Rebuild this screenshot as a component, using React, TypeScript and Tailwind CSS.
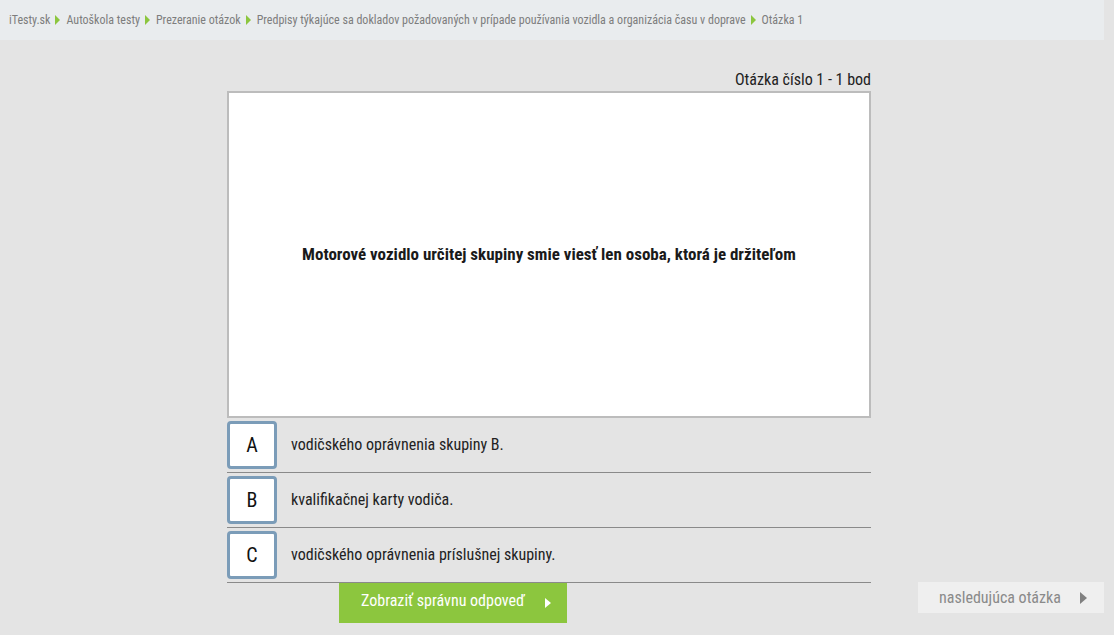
import React from "react";

const crumbs = [
  "iTesty.sk",
  "Autoškola testy",
  "Prezeranie otázok",
  "Predpisy týkajúce sa dokladov požadovaných v prípade používania vozidla a organizácia času v doprave",
  "Otázka 1",
];

const answers = [
  { key: "A", text: "vodičského oprávnenia skupiny B." },
  { key: "B", text: "kvalifikačnej karty vodiča." },
  { key: "C", text: "vodičského oprávnenia príslušnej skupiny." },
];

function Tri({ className }: { className: string }) {
  return (
    <svg viewBox="0 0 6 10" preserveAspectRatio="none" className={className} aria-hidden>
      <path d="M0 0 L6 5 L0 10 Z" fill="currentColor" />
    </svg>
  );
}

export default function App() {
  return (
    <div className="min-h-[635px] w-[1114px] bg-[#e4e4e4] font-['Roboto_Condensed','Liberation_Sans_Narrow','DejaVu_Sans_Condensed',Roboto,sans-serif] font-stretch-condensed">
      <div className="w-[1104px]">
        <nav className="flex h-[40px] items-center bg-[#e9ecee] pl-[9px] text-[12px] text-[#7d7d7d]">
          {crumbs.map((c, i) => (
            <React.Fragment key={c}>
              {i > 0 && <Tri className="ml-[5px] mr-[6px] h-[10px] w-[5px] text-[#8cc63e]" />}
              <span className="whitespace-nowrap">{c}</span>
            </React.Fragment>
          ))}
        </nav>

        <main className="ml-[227px] w-[644px] pt-[30px]">
          <div className="text-right text-[16px] leading-[20px] text-[#222]">Otázka číslo 1 - 1 bod</div>
          <div className="mt-[1px] flex h-[327px] items-center justify-center border-2 border-[#bcbcbc] bg-white">
            <p className="text-[17px] font-bold text-[#1a1a1a]">
              Motorové vozidlo určitej skupiny smie viesť len osoba, ktorá je držiteľom
            </p>
          </div>
          <div>
            {answers.map((a) => (
              <div key={a.key} className="flex h-[55px] items-center border-b border-[#8a8a8a]">
                <div className="flex h-[48px] w-[50px] items-center justify-center rounded-[4px] border-[3px] border-[#7b9cb8] bg-white text-[20px] text-[#111]">
                  {a.key}
                </div>
                <span className="ml-[14px] text-[16px] text-[#222]">{a.text}</span>
              </div>
            ))}
          </div>
        </main>

        <div className="flex items-start">
          <button className="ml-[339px] flex h-[40px] w-[228px] items-start bg-[#8cc63e] pl-[22px] pt-[6px] text-[16px] text-white">
            <span>Zobraziť správnu odpoveď</span>
            <Tri className="ml-[20px] mt-[9px] h-[10px] w-[6px] text-white" />
          </button>
          <button className="ml-auto mt-[-1px] flex h-[31px] w-[186px] items-center bg-[#efefef] pl-[21px] text-[16px] text-[#8a8a8a]">
            <span>nasledujúca otázka</span>
            <Tri className="ml-[19px] h-[12px] w-[7px] text-[#808080]" />
          </button>
        </div>
      </div>
    </div>
  );
}
